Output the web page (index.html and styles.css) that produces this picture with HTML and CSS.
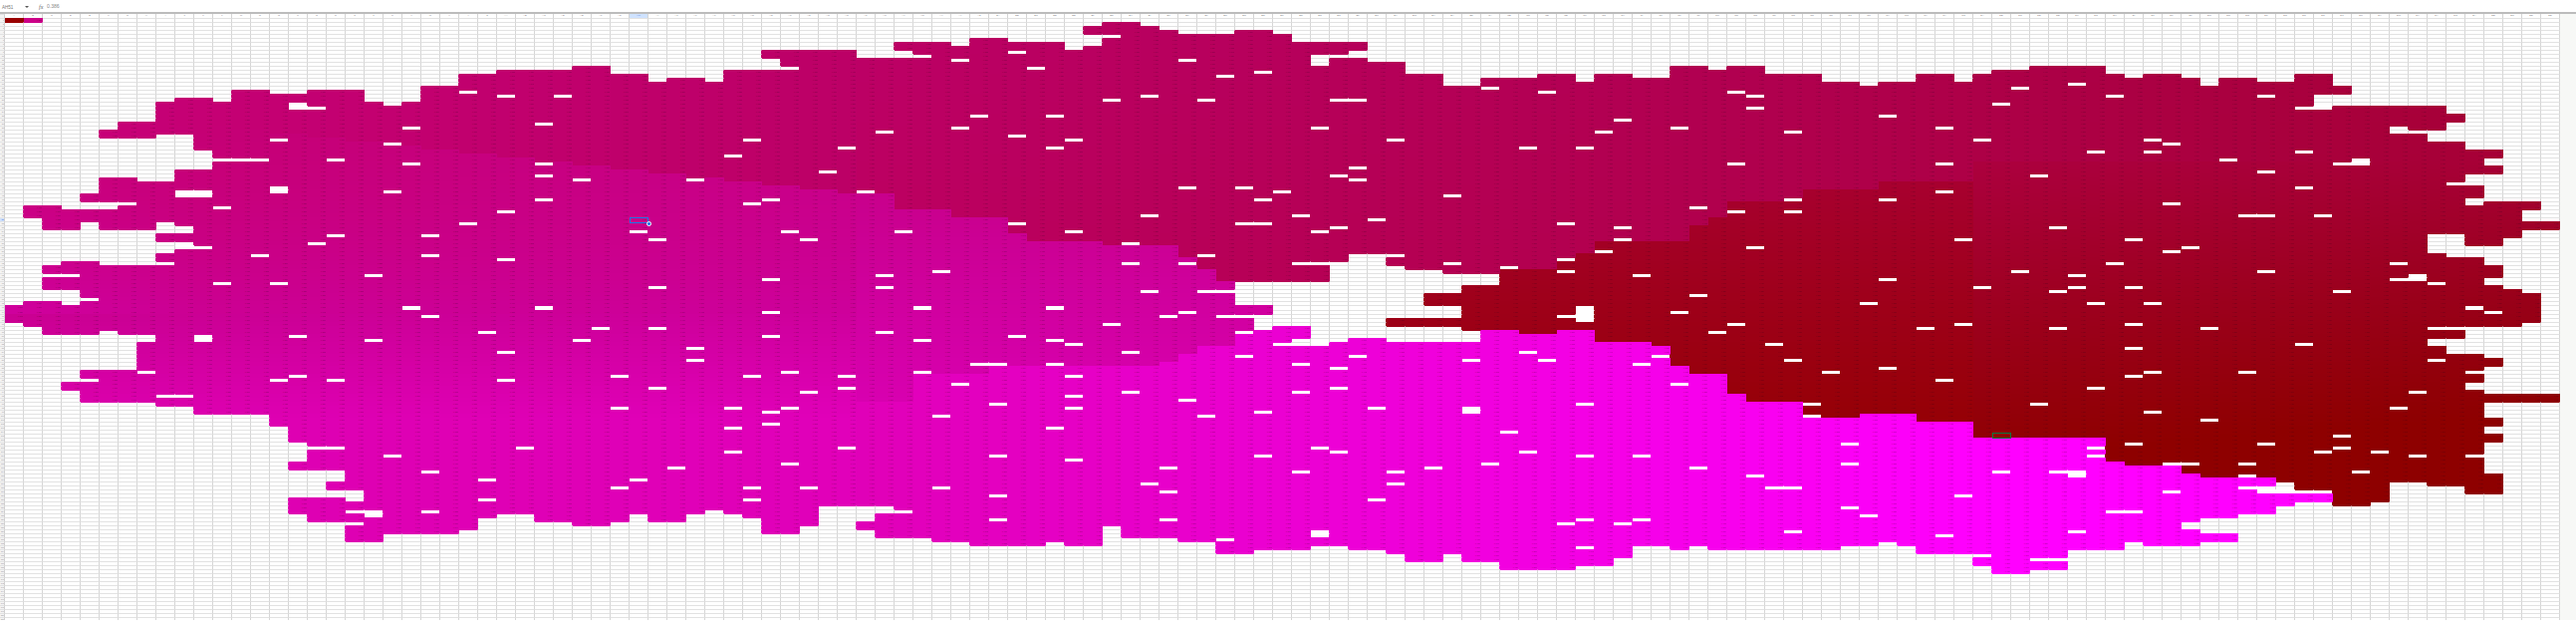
FILE: index.html
```html
<!doctype html>
<html lang="en">
<head>
<meta charset="utf-8" />
<title>Sheet</title>
<link rel="stylesheet" href="styles.css">
</head>

<body>

<div class="formula-bar">
	<span class="name-box">AH51</span>
	<span class="caret"></span>
	<span class="fx">fx</span>
	<span class="value">0.386</span>
</div>

<div class="workspace">
	<div id="sheet" class="sheet"></div>
	<div class="gutter"></div>
</div>

<script src="sheet.js"></script>
</body>
</html>
```

FILE: styles.css
```css
html,body{margin:0;padding:0;background:#fff}
body{font-family:"Liberation Sans",Arial,sans-serif;overflow:hidden}

.formula-bar{display:flex;align-items:center;height:12px;padding:2px 0 0 2px;box-sizing:border-box;color:#777;font-size:4.5px}
.name-box{width:23px}
.caret{width:0;height:0;margin-right:10px;border:2px solid transparent;border-top:2.5px solid #555;border-bottom:0}
.fx{width:8px;font-family:"Liberation Serif",serif;font-style:italic;font-size:6px;color:#666}
.value{margin-top:-3px;font-size:5px;color:#888}

.workspace{display:flex;border-top:2px solid #bcbcbc}
.sheet{width:2570px;flex:none}
.gutter{flex:1;background:#f7f8f6}

.row{display:flex;height:4px}
.row.tall{height:5px}
.row.head{height:4px}
.row.last{height:3px}

.row-num{width:5px;flex:none;box-sizing:border-box;background:#f4f4f4;border-right:1px solid #d0d0d0;border-top:1px solid #e2e2e2;overflow:hidden;font-size:2px;line-height:3px;text-align:right;color:#8a8a8a}
.row-num.on{background:#cfe2ff;color:#1a56c4}

.col-name{width:19px;flex:none;box-sizing:border-box;background:#fff;border-right:1px solid #d4d4d4;overflow:hidden;font-size:2.5px;line-height:4px;text-align:center;color:#777}
.col-name.on{background:#cfe2ff;color:#1a56c4}

.cell{width:19px;flex:none;box-sizing:border-box;border-top:1px solid #e2e2e2;border-right:1px solid #d6d6d6;overflow:hidden;font-size:2px;line-height:3px;text-align:right;color:rgba(40,0,24,.5)}
.cell.hole{background:#fff;border-color:#fff}

.cell.active,.cell.linked{position:relative;overflow:visible;z-index:2}
.cell.active::before{content:"";position:absolute;left:0;right:-1px;top:-1px;bottom:-2px;border:1px solid #1a7ae8}
.cell.active::after{content:"";position:absolute;right:-4px;bottom:-5px;width:3px;height:3px;border:1.5px solid #fff;border-radius:50%;background:#1a73e8}
.cell.linked::before{content:"";position:absolute;left:0;right:-1px;top:-2px;bottom:-1px;border:1px solid #0e7a3e}
```

FILE: sheet.js
```js
'use strict';
var ROWS = 151, COLS = 135;

// [last index of the run, value]
function expand(runs, n){
	var out = [], i = 0;
	runs.forEach(function(run){
		for(; i <= run[0] && i < n; i++) out.push(run[1]);
		});
	return out;
	}

var top_ = expand([[0,72],[3,47],[4,44],[5,28],[7,26],[8,21],[10,20],[11,21],[13,18],[15,19],[18,18],[19,21],[20,22],[21,21],[23,17],[25,14],[29,13],[31,12],[33,14],[34,16],[36,15],[37,16],[39,13],[44,8],
	[46,10],[49,6],[50,7],[52,5],[55,6],[56,8],[57,2],[59,1],[60,2],[61,3],[64,4],[66,3],[67,4],[71,6],[73,11],[75,14],[77,17],[80,15],[82,14],[83,16],[85,14],[87,15],[89,12],[90,13],
	[92,12],[95,14],[97,16],[98,17],[100,16],[102,14],[103,16],[104,14],[106,13],[110,12],[111,14],[112,15],[114,14],[115,15],[116,17],[118,15],[120,16],[122,14],[123,17],[134,22]], COLS);

var bottom = expand([[17,999],[19,130],[23,128],[24,127],[25,124],[27,123],[29,125],[31,126],[32,125],[33,123],[35,125],[36,123],[37,122],[38,123],[39,124],[41,128],[42,126],[44,121],[45,127],[48,129],[50,130],[54,131],[55,130],[57,131],[58,126],[61,129],[63,130],[65,133],[68,132],[70,131],[72,132],[73,133],[75,135],[76,133],[78,135],[82,137],[84,136],[85,134],[87,131],[88,132],[89,131],[96,132],[98,131],[99,130],[100,131],[103,133],[104,136],[106,138],[108,137],[111,132],[112,130],[115,131],[117,130],[119,123],[120,121],[122,120],[124,121],[125,120],[127,115],[129,116],[131,118],[134,999]], COLS);

var left = expand([[25,0],[27,6],[29,5],[32,10],[37,11],[39,9],[43,5],[46,4],[49,1],[52,2],[53,10],[55,8],[56,10],[58,9],[60,8],[61,3],[67,2],[70,4],[71,1],[75,0],[76,1],[78,2],[80,8],[87,7],[90,4],[92,3],[95,4],[96,8],[98,10],[101,14],[105,15],[110,16],[112,15],[115,18],[117,17],[119,19],[123,15],[125,16],[150,18]], ROWS);

var right = expand([[18,134],[21,121],[23,128],[25,129],[27,128],[28,125],[30,127],[32,129],[34,131],[36,130],[38,131],[41,129],[44,130],[45,129],[47,133],[50,132],[52,134],[54,132],[56,131],[58,127],[59,128],[61,130],[64,131],[66,130],[67,131],[68,132],[75,133],[76,132],[79,129],[81,127],[83,128],[84,130],[86,131],[90,130],[92,129],[93,130],[95,134],[99,130],[101,131],[103,130],[105,131],[113,130],[150,131]], ROWS);

// empty cells inside the outline, gridlines showing: [row, row, col, col]
var blanks = [[10,12,40,40],[8,9,47,47],[4,6,57,57],[9,11,69,69],[9,9,70,70],[8,9,71,71],[29,29,8,9],[40,40,7,8],[47,47,3,5],[51,52,4,4],[51,51,8,8],[52,52,8,9],[61,61,5,7],[71,71,3,3],[78,78,5,5],[120,120,18,18],
	[27,27,126,126],[46,46,130,130],[54,56,128,129],[66,66,128,128],[122,125,45,45],[122,123,46,46],[125,128,116,117],[126,127,115,115],[116,117,120,120],[117,117,119,119],
	[66,71,65,65],[66,71,66,66],[74,77,66,66],[66,76,67,67],[66,76,68,68],[80,81,68,68],[66,80,69,69],[61,80,70,70],[59,79,71,72],[62,74,73,73],[77,80,73,73],[63,74,74,74],[77,80,74,74],[63,68,75,75],[72,74,75,75],[77,80,75,75],[64,68,76,76],[72,74,76,76],[77,80,76,76],[64,66,77,77],[78,80,77,77],[64,66,78,78]];

// white cells: row -> cols
var holes = {4:[58],8:[53],9:[48],10:[50,62],12:[41,54],13:[66],14:[64],16:[109],17:[78,106],18:[24,81,91],19:[26,29,60,92,111,119],20:[58,63,70,71],21:[15,105],22:[15,16,92,121,122],24:[51,55,99],25:[85],26:[28],27:[21,50,69,88,102],28:[46,84,94],29:[53],30:[14,39,56,73,104,113],31:[20,114],32:[44,55,80,83],33:[110,113,121],34:[38],35:[11,12,13,17,117,124],36:[21,28,91,102,123,124],37:[71],38:[43,119],39:[28,70,107],40:[30,36,71],41:[129],42:[14,62,65,121],43:[9,10,14,20,45,67,102],44:[9,10,76],45:[28,40,66,94,99],46:[4,5,6,39,114],47:[11,89],48:[26,91,94],49:[60,68,118,119,122],50:[72],51:[24,53,65,66,82],52:[70,85,108],53:[33,41,47,56,69],54:[17,22],55:[34,42,85,103,112],56:[16,59],57:[9,10,92,115],58:[84,114],59:[13,22,63,73],60:[26,82],61:[8,59,62,68,69,76,111,126],62:[79],63:[49,82,106,119],64:[2,3,19,46,86,109,127],65:[40,99,126,127],66:[11,14],67:[34,46,104,109,112],68:[60,63,64,108,123],69:[89],70:[4],71:[98,110,113],72:[21,28,48,55,83,130],73:[40,62,83,88,131],74:[22,61,64,65,82,83],75:[83],76:[58,91,103,112],77:[31,34,101,108,116,128,129],78:[25,46,65,90],79:[10,15,40,53],80:[10,19,30,48,55],81:[56,67,69,93,121],82:[36,112],83:[26,59,80],84:[65,71,87],85:[36,77,81,94,128],86:[51,52,55,68,86],87:[70,99],88:[7,41,48,96,113,118,130],89:[15,32,39,44,56,112],90:[4,14,17,26,102],91:[50,88],92:[34,44,70,110],93:[42,59,68,127],94:[8,9,56],95:[62],96:[52,83,95,107],97:[32,38,41,56,72,77,126],98:[40,66,77,113],99:[49,63,95],100:[116],101:[40],102:[38,55],103:[79],104:[123],106:[97,112,119],107:[16,17,27,44,69,110,123],108:[38,70,80,122,125],109:[20,52,66,83,86,110,127,130],110:[56],111:[41,78,97,114,115,118],112:[35,61,75,89],113:[22,68,73,105,108,109,124],114:[92,109,118],115:[25,33],116:[60,73],117:[32,39,42,49,93,94,118],118:[61,114,119,120,121,122],119:[52,103],120:[25,39,72],122:[97],123:[18,19,22,47,111,112],124:[19,98],125:[52,61,83,86],126:[18,82,85],128:[69,94,109],129:[69,102],130:[64],132:[83],134:[104],135:[107,108]};

// colour zones
var brightTop = {}, darkTop = {}, redTop = {};
function setRuns(obj, first, runs){
	var c = first;
	runs.forEach(function(run){ for(; c <= run[0]; c++) obj[c] = run[1]; });
	}
setRuns(brightTop, 45, [[47,96],[51,89],[60,87],[61,86],[62,84],[64,82],[66,78],[68,77],[69,82],[70,81],[72,80],[77,81],[79,78],[81,79],[83,78],[86,81],[87,82],[88,87],[90,89],[91,94],[94,96],[97,100],[100,99],[103,101],[110,105],[111,111],[114,112],[115,114],[119,115],[122,119],[134,999]]);
setRuns(darkTop, 45, [[46,44],[49,48],[52,50],[53,54],[57,56],[61,57],[62,60],[63,63],[64,66],[66,72],[134,999]]);
setRuns(redTop, 45, [[72,999],[74,75],[76,69],[78,67],[81,63],[82,61],[83,59],[88,56],[89,52],[90,50],[94,46],[98,43],[103,41],[134,36]]);

function rgb(r, b){
	return "rgb(" + Math.round(Math.min(255, r)) + ",0," + Math.round(Math.max(0, Math.min(255, b))) + ")";
	}

function colour(c, r){
	if(c < 45){
		if(r >= 74){
			var low = Math.min(r - 74, 26);
			return rgb(202 + low * 0.7 + c * 0.1, 146 + low * 1.1 + c * 0.25);
			}
		var edge = 44 - (45 - c) * 0.5, red = 188 + (45 - c) * 0.25, blue = 102 + (45 - c) * 0.4;
		if(r < edge) return rgb(red, blue);
		var jump = c > 10 ? (c - 10) / 35 * 38 : 0, d = r - edge;
		return rgb(red + jump * 0.35 + d * 0.15, blue + jump + d * 0.3 + d * d * 0.008);
		}
	if(r >= brightTop[c]){
		var t = Math.min(1, (c - 45) / 60);
		return rgb(224 + t * 31, 184 + t * 71);
		}
	if(r >= darkTop[c]) return rgb(202 + (r - 50) * 0.3, 144 + (r - 50) * 0.7);
	if(c >= 104 && r >= 36) return rgb(Math.max(142, 172 - (c - 104) * 0.2 - (r - 36) * 0.4), 62 - (r - 36) * 0.85 - (c - 104) * 0.3);
	if(r >= redTop[c]) return rgb(Math.max(142, 166 - (r - 45) * 0.3), 44 - (r - 45) * 0.7);
	var b = c > 90 ? 82 - (c - 90) * 0.6 : 102 - (c - 45) * 0.45;
	return rgb(188 - (c - 45) * 0.25, b - r * 0.1);
	}

function colName(c){
	var s = "";
	for(c = c + 1; c > 0; c = Math.floor((c - 1) / 26)) s = String.fromCharCode(65 + (c - 1) % 26) + s;
	return s;
	}

// build the fill map first, neighbours need it for the gridlines
var map = [], i, j;
for(i = 0; i < ROWS; i++){
	map.push([]);
	for(j = 0; j < COLS; j++){
		map[i].push(i >= top_[j] && i <= bottom[j] && j >= left[i] && j <= right[i] ? colour(j, i) : null);
		}
	}
blanks.forEach(function(b){
	for(var r = b[0]; r <= b[1]; r++) for(var c = b[2]; c <= b[3]; c++) map[r][c] = null;
	});
map[0][0] = "#9a0000";
map[0][1] = "#cc0088";

function isHole(r, c){
	return holes[r] && holes[r].indexOf(c) >= 0;
	}

var html = '<div class="row head"><div class="row-num"></div>';
for(j = 0; j < COLS; j++) html += '<div class="col-name' + (j == 33 ? " on" : "") + '">' + colName(j) + '</div>';
html += '</div>';

for(i = 0; i < ROWS; i++){
	html += '<div class="row' + (i == 72 ? " tall" : i == 150 ? " last" : "") + '"><div class="row-num' + (i == 50 ? " on" : "") + '">' + (i + 1) + '</div>';
	for(j = 0; j < COLS; j++){
		var fill = map[i][j], hole = isHole(i, j);
		var above = i > 0 && !isHole(i - 1, j) ? map[i - 1][j] : null;
		var next = j < COLS - 1 && !isHole(i, j + 1) ? map[i][j + 1] : null;
		var cls = "cell", css = "", text = "";

		if(i == 50 && j == 33) cls += " active";
		if(i == 104 && j == 105) cls += " linked";

		if(hole){
			cls += " hole";
			if(above) css += "border-top-color:" + above + ";";
			if(next) css += "border-right-color:" + next + ";";
			}
		else if(fill){
			css = "background:" + fill + ";border-color:" + fill + ";";
			text = i == 50 && j == 33 ? "0.386" : "0." + (100 + (i * 73 + j * 151) % 800);
			}
		else{
			if(above) css += "border-top-color:" + above + ";";
			if(next) css += "border-right-color:" + next + ";";
			}
		html += '<div class="' + cls + '"' + (css ? ' style="' + css + '"' : "") + '>' + text + '</div>';
		}
	html += '</div>';
	}

document.getElementById("sheet").innerHTML = html;
```
